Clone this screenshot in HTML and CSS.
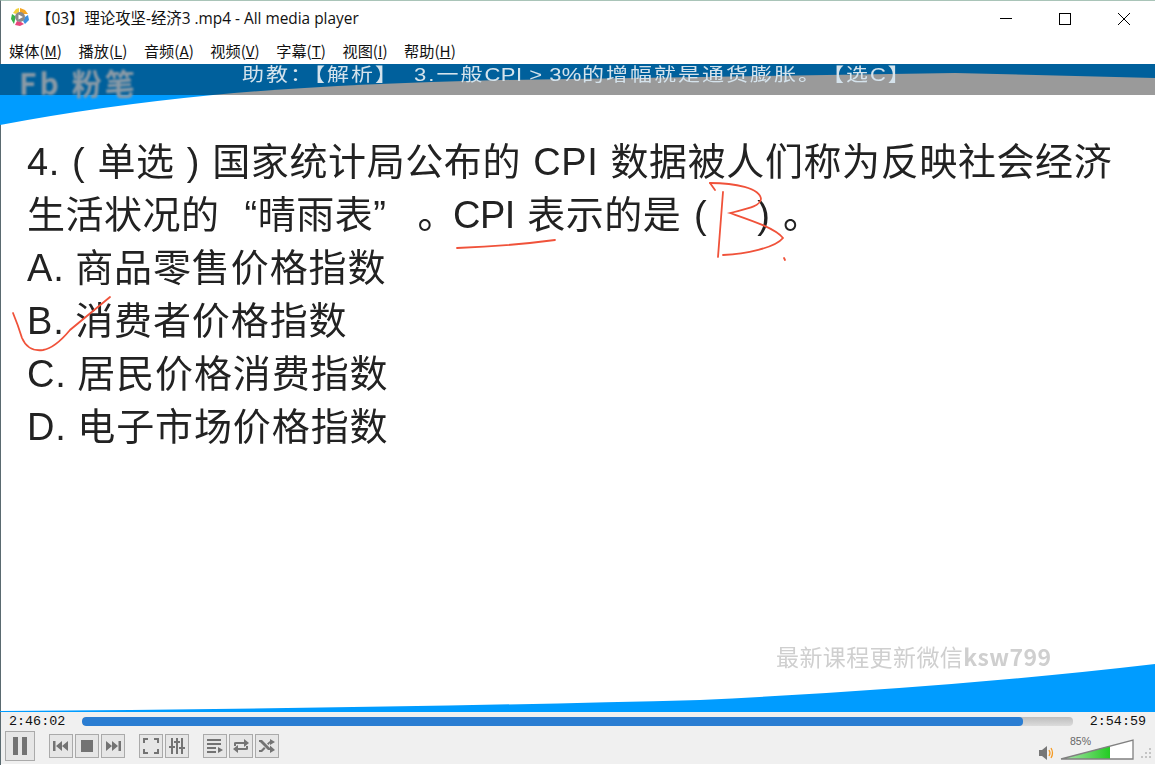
FILE: index.html
```html
<!DOCTYPE html>
<html>
<head>
    <title>All media player</title>
    <link rel="stylesheet" href="styles.css">
</head>
<body>

<div class="window">

    <!-- TITLE BAR -->
    <div class="titlebar">
        <svg class="logo" width="20" height="20" viewBox="0 0 20 20">
            <path d="M10 1 L15 3 L18 7 L13 7 L10 5 Z" fill="#f5a623"/>
            <path d="M18 8 L19 13 L15 17 L13 14 L15 10 Z" fill="#3b8fe0"/>
            <path d="M14 17 L10 19 L5 18 L7 14 L11 15 Z" fill="#e8467c"/>
            <path d="M4 17 L1 12 L2 7 L5 9 L5 13 Z" fill="#37b34a"/>
            <path d="M3 6 L6 2 L9 1 L9 5 L6 7 Z" fill="#f2d13c"/>
            <circle cx="10" cy="10" r="5" fill="#8a8a8a"/>
            <path d="M8.5 7.5 L13 10 L8.5 12.5 Z" fill="#fff"/>
        </svg>
        <span class="title">【03】理论攻坚-经济3 .mp4 - All media player</span>
        <div class="winbtns">
            <svg class="winbtn" width="14" height="14" viewBox="0 0 14 14"><path d="M1 6.5 H13" stroke="#000" fill="none"/></svg>
            <svg class="winbtn" width="14" height="14" viewBox="0 0 14 14"><rect x="1.5" y="1.5" width="11" height="11" stroke="#000" fill="none"/></svg>
            <svg class="winbtn" width="14" height="14" viewBox="0 0 14 14"><path d="M1 1 L13 13 M13 1 L1 13" stroke="#000" fill="none"/></svg>
        </div>
    </div>

    <!-- MENU -->
    <div class="menubar">
        <span>媒体(<u>M</u>)</span>
        <span>播放(<u>L</u>)</span>
        <span>音频(<u>A</u>)</span>
        <span>视频(<u>V</u>)</span>
        <span>字幕(<u>T</u>)</span>
        <span>视图(<u>I</u>)</span>
        <span>帮助(<u>H</u>)</span>
    </div>

    <!-- VIDEO -->
    <div class="video">
        <svg class="slide-bg" width="1155" height="648" viewBox="0 64 1155 648">
            <rect x="0" y="64" width="1155" height="31" fill="#00609c"/>
            <path d="M213 95 Q330 84 500 80 L955 73 L1155 78 V95 Z" fill="#9a9a9a"/>
            <path d="M0 95 H213 Q100 106 0 125 Z" fill="#009cff"/>
            <path d="M0 712 V711 Q400 708 700 700 Q950 688 1155 664 V712 Z" fill="#009cff"/>
        </svg>

        <div class="brand">Fb 粉笔</div>
        <div class="subtitle">助教：【解析】<span class="sub-num">3.</span>一般<span class="sub-lat">CPI &gt; 3%</span>的增幅就是通货膨胀。<span class="sub-end">【选C】</span></div>

        <div class="question">
            <div class="line first">4. ( 单选 ) 国家统计局公布的 CPI 数据被人们称为反映社会经济</div>
            <div class="line second">生活状况的&nbsp; “晴雨表”<span class="stop">。</span><span class="cpi">CPI</span> 表示的是 (&nbsp;&nbsp;&nbsp;&nbsp;) 。</div>
            <div class="line">A. 商品零售价格指数</div>
            <div class="line">B. 消费者价格指数</div>
            <div class="line">C. 居民价格消费指数</div>
            <div class="line">D. 电子市场价格指数</div>
        </div>

        <div class="wechat">最新课程更新微信<b>ksw799</b></div>

        <!-- pen marks -->
        <svg class="ink" width="1155" height="648" viewBox="0 64 1155 648">
            <path d="M457 248 Q510 246 555 240"/>
            <path d="M723 192 L718 257"/>
            <path d="M710 183 C735 183 760 188 761 199 C760 207 745 209 730 213 C750 220 775 228 783 238 C775 248 745 254 723 255"/>
            <path d="M710 183 L715 190"/>
            <path d="M784 258 L785 260"/>
            <path d="M13 313 Q18 325 22 338 Q28 352 43 350 Q55 348 70 330 L110 297"/>
        </svg>
    </div>

    <!-- CONTROLS -->
    <div class="controls">
        <div class="seekrow">
            <span class="time">2:46:02</span>
            <div class="track"><div class="fill" style="width: 94.95%"></div></div>
            <span class="time">2:54:59</span>
        </div>
        <div class="btnrow">
            <div class="btn big">
                <svg width="18" height="20" viewBox="0 0 18 20"><path d="M2 1 H7 V19 H2 Z M11 1 H16 V19 H11 Z"/></svg>
            </div>
            <div class="group">
                <div class="btn"><svg width="16" height="12" viewBox="0 0 16 12"><path d="M0 1 H2.500 V11 H0 Z M9 1 V11 L3 6 Z M15 1 V11 L9 6 Z"/></svg></div>
                <div class="btn"><svg width="12" height="12" viewBox="0 0 12 12"><rect width="12" height="12"/></svg></div>
                <div class="btn"><svg width="16" height="12" viewBox="0 0 16 12"><path d="M1 1 V11 L7 6 Z M7 1 V11 L13 6 Z M13.500 1 H16 V11 H13.500 Z"/></svg></div>
            </div>
            <div class="group">
                <div class="btn"><svg width="16" height="16" viewBox="0 0 16 16"><path d="M0 0 H5 V2 H2 V5 H0 Z M11 0 H16 V5 H14 V2 H11 Z M0 11 H2 V14 H5 V16 H0 Z M14 11 H16 V16 H11 V14 H14 Z"/></svg></div>
                <div class="btn"><svg width="16" height="16" viewBox="0 0 16 16"><path d="M2 0 H4 V8 H6 V10 H4 V16 H2 V10 H0 V8 H2 Z M7 0 H9 V3 H11 V5 H9 V16 H7 V5 H5 V3 H7 Z M12 0 H14 V9 H16 V11 H14 V16 H12 V11 H10 V9 H12 Z"/></svg></div>
            </div>
            <div class="group">
                <div class="btn"><svg width="16" height="14" viewBox="0 0 16 14"><path d="M0 0 H14 V2 H0 Z M0 4 H14 V6 H0 Z M0 8 H9 V10 H0 Z M0 12 H9 V14 H0 Z M11 8 L16 11 L11 14 Z"/></svg></div>
                <div class="btn"><svg width="18" height="14" viewBox="0 0 18 14"><path d="M2 7 V4 Q2 3 4 3 H12 V0 L17 4 L12 8 V5 H4 V7 Z M16 7 V10 Q16 11 14 11 H6 V14 L1 10 L6 6 V9 H14 V7 Z"/></svg></div>
                <div class="btn"><svg width="16" height="14" viewBox="0 0 16 14"><path d="M0 1 H3 L11 9 V6.500 L16 11 L11 14 V11 H9 L1 3 H0 Z M0 11 H2 L5 8 L6.500 9.500 L3 13 H0 Z M8 4.500 L11 2 V0 L16 3 L11 6 V4 L9.500 6 Z"/></svg></div>
            </div>
            <div class="volume">
                <svg width="16" height="16" viewBox="0 0 16 16">
                    <path d="M0 5 H3 L8 1 V15 L3 11 H0 Z" fill="#777"/>
                    <path d="M10 5 Q12 8 10 11 M12 3 Q15 8 12 13" stroke="#f59a23" stroke-width="1.300" fill="none"/>
                </svg>
                <svg class="volbar" width="76" height="32" viewBox="0 0 76 32">
                    <defs>
                        <linearGradient id="volgreen" x1="0" x2="1" y1="0" y2="0">
                            <stop offset="0" stop-color="#b5e3b5"/>
                            <stop offset="1" stop-color="#22cc22"/>
                        </linearGradient>
                    </defs>
                    <path d="M1 29 L50 16 V29 Z" fill="url(#volgreen)"/>
                    <path d="M50 16 L73 10 V29 H50 Z" fill="#fff"/>
                    <path d="M1 29 L73 10 V29 Z" fill="none" stroke="#808080" stroke-width="1.300"/>
                    <text x="10" y="15" class="volpct">85%</text>
                </svg>
                <svg class="grip" width="11" height="11" viewBox="0 0 11 11">
                    <path d="M8 0 H10 V2 H8 Z M4 4 H6 V6 H4 Z M8 4 H10 V6 H8 Z M0 8 H2 V10 H0 Z M4 8 H6 V10 H4 Z M8 8 H10 V10 H8 Z" fill="#c4c4c4"/>
                </svg>
            </div>
        </div>
    </div>

</div>

</body>
</html>
```
FILE: styles.css
```css
body {
    margin: 0;
    font-family: "Noto Sans CJK SC", sans-serif;
    background: #fff;
    overflow: hidden;
}

.window {
    width: 1155px;
    height: 765px;
    display: flex;
    flex-direction: column;
    box-sizing: border-box;
    border-top: 1px solid #a9c4b8;
    border-left: 1px solid #5a6a70;
}

.titlebar {
    height: 31px;
    display: flex;
    align-items: center;
    padding-left: 9px;
    background: #fff;
}

.logo {
    margin-right: 6px;
}

.title {
    font-family: "Open Sans", "Noto Sans CJK SC", sans-serif;
    font-size: 15.4px;
    color: #111;
    padding-top: 1px;
}

.winbtns {
    margin-left: auto;
    display: flex;
    gap: 45px;
    padding-right: 24px;
    margin-top: 4px;
}

.menubar {
    height: 32px;
    display: flex;
    gap: 16.5px;
    align-items: center;
    padding-left: 8px;
    font-size: 15.2px;
    color: #111;
    background: #fff;
    padding-top: 3px;
    box-sizing: border-box;
}

.video {
    position: relative;
    height: 648px;
    background: #fff;
    padding: 72px 0 0 26px;
    box-sizing: border-box;
}

.slide-bg, .ink {
    position: absolute;
    left: -1px;
    top: 0;
}

.ink path {
    fill: none;
    stroke: #f0523a;
    stroke-width: 1.8;
    stroke-linecap: round;
}

.brand {
    position: absolute;
    left: 18px;
    top: 2px;
    font-size: 30px;
    line-height: 32px;
    font-weight: 700;
    color: #8a9aa6;
    filter: blur(0.8px);
    letter-spacing: 3px;
}

.subtitle {
    position: absolute;
    left: 241px;
    top: 1px;
    font-family: "Liberation Sans", "Noto Sans CJK SC", sans-serif;
    font-size: 22px;
    line-height: 20px;
    letter-spacing: 2px;
    color: #d5e3ec;
    white-space: nowrap;
    filter: blur(0.4px);
    transform: scaleY(0.85);
}

.sub-num {
    margin-left: 15px;
}

.sub-lat {
    letter-spacing: 0.5px;
}

.sub-end {
    margin-left: 11px;
}

.question {
    position: relative;
    color: #222;
    filter: blur(0.5px);
}

.line {
    height: 53px;
    line-height: 53px;
    font-family: "Liberation Sans", "Noto Sans CJK SC", sans-serif;
    font-size: 38px;
    letter-spacing: 0.9px;
    word-spacing: -1px;
    white-space: nowrap;
}

.first {
    letter-spacing: 0.6px;
    word-spacing: 1px;
}

.second {
    letter-spacing: 0.5px;
    word-spacing: 1.5px;
}

.stop {
    margin: 0 -3px 0 31px;
}

.cpi {
    letter-spacing: -0.5px;
}

.wechat {
    position: absolute;
    left: 775px;
    top: 575px;
    font-size: 23px;
    letter-spacing: 0.4px;
    color: #cfcfcf;
    white-space: nowrap;
    filter: blur(0.5px);
}

.controls {
    height: 52px;
    background: #f0f0f0;
    display: flex;
    flex-direction: column;
}

.seekrow {
    height: 20px;
    display: flex;
    align-items: center;
    padding: 0 9px 0 8px;
}

.time {
    font-family: "Liberation Mono", monospace;
    font-size: 13.4px;
    color: #111;
    white-space: nowrap;
}

.track {
    flex: 1;
    height: 9px;
    margin: 0 17px;
    border-radius: 4px;
    background: linear-gradient(#bdbdbd, #dcdcdc);
    overflow: hidden;
}

.fill {
    height: 100%;
    background: #2a7dd2;
    border-radius: 4px;
}

.btnrow {
    flex: 1;
    display: flex;
    align-items: center;
    padding: 0 0 2px 4px;
}

.group {
    display: flex;
    gap: 2px;
    margin-right: 14px;
}

.btn {
    width: 24px;
    height: 24px;
    box-sizing: border-box;
    border: 1px solid #aaa;
    background: #e6e6e6;
    display: flex;
    align-items: center;
    justify-content: center;
}

.btn svg {
    fill: #737373;
}

.btn.big {
    width: 30px;
    height: 30px;
    margin-right: 14px;
}

.volume {
    margin-left: auto;
    display: flex;
    align-items: flex-end;
    padding-bottom: 1px;
    align-self: stretch;
}

.volbar {
    margin-left: 5px;
    margin-bottom: -1px;
}

.volpct {
    font-family: "Liberation Sans", sans-serif;
    font-size: 10.5px;
    fill: #666;
}

.grip {
    margin: 0 3px 2px 5px;
}
```
